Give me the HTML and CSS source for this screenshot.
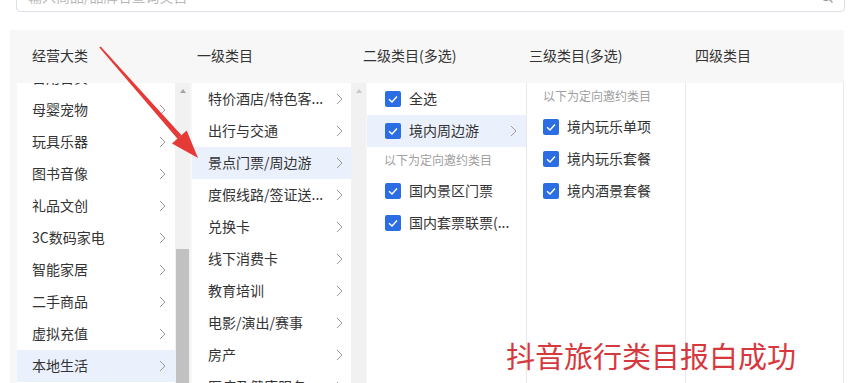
FILE: index.html
```html
<!DOCTYPE html>
<html lang="zh-CN">
<head>
    <meta charset="UTF-8">
    <meta name="viewport" content="width=device-width, initial-scale=1.0">
    <title>类目选择</title>
    <link rel="stylesheet" href="styles.css">
</head>
<body>
    <div class="search">
        <span class="search-ph">输入商品/品牌名查询类目</span>
        <svg class="search-icon" width="14" height="14" viewBox="0 0 14 14"><circle cx="6" cy="6" r="4.5" fill="none" stroke="#999" stroke-width="1.3"/><line x1="9.3" y1="9.3" x2="12.5" y2="12.5" stroke="#999" stroke-width="1.3"/></svg>
    </div>

    <div class="panel">
        <div class="panel-head">
            <div class="head-cell">经营大类</div>
            <div class="head-cell">一级类目</div>
            <div class="head-cell">二级类目(多选)</div>
            <div class="head-cell">三级类目(多选)</div>
            <div class="head-cell">四级类目</div>
        </div>

        <div class="panel-body">
            <!-- 经营大类 -->
            <div class="col col-scroll col-first">
                <div class="list">
                    <div class="list-inner shifted">
                        <div class="row"><span>日用百货</span><svg class="chev" width="7" height="12" viewBox="0 0 7 12"><polyline points="1,1 6,6 1,11" fill="none" stroke="#999" stroke-width="1"/></svg></div>
                        <div class="row"><span>母婴宠物</span><svg class="chev" width="7" height="12" viewBox="0 0 7 12"><polyline points="1,1 6,6 1,11" fill="none" stroke="#999" stroke-width="1"/></svg></div>
                        <div class="row"><span>玩具乐器</span><svg class="chev" width="7" height="12" viewBox="0 0 7 12"><polyline points="1,1 6,6 1,11" fill="none" stroke="#999" stroke-width="1"/></svg></div>
                        <div class="row"><span>图书音像</span><svg class="chev" width="7" height="12" viewBox="0 0 7 12"><polyline points="1,1 6,6 1,11" fill="none" stroke="#999" stroke-width="1"/></svg></div>
                        <div class="row"><span>礼品文创</span><svg class="chev" width="7" height="12" viewBox="0 0 7 12"><polyline points="1,1 6,6 1,11" fill="none" stroke="#999" stroke-width="1"/></svg></div>
                        <div class="row"><span>3C数码家电</span><svg class="chev" width="7" height="12" viewBox="0 0 7 12"><polyline points="1,1 6,6 1,11" fill="none" stroke="#999" stroke-width="1"/></svg></div>
                        <div class="row"><span>智能家居</span><svg class="chev" width="7" height="12" viewBox="0 0 7 12"><polyline points="1,1 6,6 1,11" fill="none" stroke="#999" stroke-width="1"/></svg></div>
                        <div class="row"><span>二手商品</span><svg class="chev" width="7" height="12" viewBox="0 0 7 12"><polyline points="1,1 6,6 1,11" fill="none" stroke="#999" stroke-width="1"/></svg></div>
                        <div class="row"><span>虚拟充值</span><svg class="chev" width="7" height="12" viewBox="0 0 7 12"><polyline points="1,1 6,6 1,11" fill="none" stroke="#999" stroke-width="1"/></svg></div>
                        <div class="row active"><span>本地生活</span><svg class="chev" width="7" height="12" viewBox="0 0 7 12"><polyline points="1,1 6,6 1,11" fill="none" stroke="#999" stroke-width="1"/></svg></div>
                    </div>
                </div>
                <div class="scrollbar">
                    <span class="sb-btn"><span class="sb-up"></span></span>
                    <span class="sb-thumb"></span>
                </div>
            </div>

            <!-- 一级类目 -->
            <div class="col col-scroll col-second">
                <div class="list">
                    <div class="list-inner">
                        <div class="row"><span>特价酒店/特色客...</span><svg class="chev" width="7" height="12" viewBox="0 0 7 12"><polyline points="1,1 6,6 1,11" fill="none" stroke="#999" stroke-width="1"/></svg></div>
                        <div class="row"><span>出行与交通</span><svg class="chev" width="7" height="12" viewBox="0 0 7 12"><polyline points="1,1 6,6 1,11" fill="none" stroke="#999" stroke-width="1"/></svg></div>
                        <div class="row active"><span>景点门票/周边游</span><svg class="chev" width="7" height="12" viewBox="0 0 7 12"><polyline points="1,1 6,6 1,11" fill="none" stroke="#999" stroke-width="1"/></svg></div>
                        <div class="row"><span>度假线路/签证送...</span><svg class="chev" width="7" height="12" viewBox="0 0 7 12"><polyline points="1,1 6,6 1,11" fill="none" stroke="#999" stroke-width="1"/></svg></div>
                        <div class="row"><span>兑换卡</span><svg class="chev" width="7" height="12" viewBox="0 0 7 12"><polyline points="1,1 6,6 1,11" fill="none" stroke="#999" stroke-width="1"/></svg></div>
                        <div class="row"><span>线下消费卡</span><svg class="chev" width="7" height="12" viewBox="0 0 7 12"><polyline points="1,1 6,6 1,11" fill="none" stroke="#999" stroke-width="1"/></svg></div>
                        <div class="row"><span>教育培训</span><svg class="chev" width="7" height="12" viewBox="0 0 7 12"><polyline points="1,1 6,6 1,11" fill="none" stroke="#999" stroke-width="1"/></svg></div>
                        <div class="row"><span>电影/演出/赛事</span><svg class="chev" width="7" height="12" viewBox="0 0 7 12"><polyline points="1,1 6,6 1,11" fill="none" stroke="#999" stroke-width="1"/></svg></div>
                        <div class="row"><span>房产</span><svg class="chev" width="7" height="12" viewBox="0 0 7 12"><polyline points="1,1 6,6 1,11" fill="none" stroke="#999" stroke-width="1"/></svg></div>
                        <div class="row"><span>医疗及健康服务</span><svg class="chev" width="7" height="12" viewBox="0 0 7 12"><polyline points="1,1 6,6 1,11" fill="none" stroke="#999" stroke-width="1"/></svg></div>
                    </div>
                </div>
                <div class="scrollbar">
                    <span class="sb-btn"><span class="sb-up light"></span></span>
                </div>
            </div>

            <!-- 二级类目 -->
            <div class="col col-plain col-third">
                <div class="row check-row"><span class="check"><svg width="16" height="16" viewBox="0 0 16 16"><rect width="16" height="16" rx="2" fill="#2b6de3"/><polyline points="4,8.3 7,11 12,5.5" fill="none" stroke="#fff" stroke-width="1.5"/></svg></span><span class="label">全选</span></div>
                <div class="row check-row active"><span class="check"><svg width="16" height="16" viewBox="0 0 16 16"><rect width="16" height="16" rx="2" fill="#2b6de3"/><polyline points="4,8.3 7,11 12,5.5" fill="none" stroke="#fff" stroke-width="1.5"/></svg></span><span class="label">境内周边游</span><svg class="chev" width="7" height="12" viewBox="0 0 7 12"><polyline points="1,1 6,6 1,11" fill="none" stroke="#999" stroke-width="1"/></svg></div>
                <div class="note">以下为定向邀约类目</div>
                <div class="row check-row"><span class="check"><svg width="16" height="16" viewBox="0 0 16 16"><rect width="16" height="16" rx="2" fill="#2b6de3"/><polyline points="4,8.3 7,11 12,5.5" fill="none" stroke="#fff" stroke-width="1.5"/></svg></span><span class="label">国内景区门票</span></div>
                <div class="row check-row"><span class="check"><svg width="16" height="16" viewBox="0 0 16 16"><rect width="16" height="16" rx="2" fill="#2b6de3"/><polyline points="4,8.3 7,11 12,5.5" fill="none" stroke="#fff" stroke-width="1.5"/></svg></span><span class="label">国内套票联票(...</span></div>
            </div>

            <!-- 三级类目 -->
            <div class="col col-plain col-fourth">
                <div class="note">以下为定向邀约类目</div>
                <div class="row check-row"><span class="check"><svg width="16" height="16" viewBox="0 0 16 16"><rect width="16" height="16" rx="2" fill="#2b6de3"/><polyline points="4,8.3 7,11 12,5.5" fill="none" stroke="#fff" stroke-width="1.5"/></svg></span><span class="label">境内玩乐单项</span></div>
                <div class="row check-row"><span class="check"><svg width="16" height="16" viewBox="0 0 16 16"><rect width="16" height="16" rx="2" fill="#2b6de3"/><polyline points="4,8.3 7,11 12,5.5" fill="none" stroke="#fff" stroke-width="1.5"/></svg></span><span class="label">境内玩乐套餐</span></div>
                <div class="row check-row"><span class="check"><svg width="16" height="16" viewBox="0 0 16 16"><rect width="16" height="16" rx="2" fill="#2b6de3"/><polyline points="4,8.3 7,11 12,5.5" fill="none" stroke="#fff" stroke-width="1.5"/></svg></span><span class="label">境内酒景套餐</span></div>
            </div>

            <!-- 四级类目 -->
            <div class="col col-plain col-fifth"></div>
        </div>
    </div>

    <svg class="arrow" width="861" height="383" viewBox="0 0 861 383">
        <polygon points="99.3,47.6 100.7,46.4 181.5,135.2 177.5,138.8" fill="#e63a37"/>
        <polygon points="198,158 172,143.5 186.7,130.5" fill="#e63a37"/>
    </svg>

    <div class="stamp">抖音旅行类目报白成功</div>
</body>
</html>
```

FILE: styles.css
```css
body {
    margin: 0;
    height: 383px;
    overflow: hidden;
    background: #fff;
    font-family: "Noto Sans CJK SC", "Noto Sans", sans-serif;
    font-size: 14px;
    color: #333;
}

.search {
    margin: -20px 16px 0 16px;
    height: 30px;
    border: 1px solid #dcdfe6;
    border-radius: 4px;
    display: flex;
    align-items: center;
    justify-content: space-between;
    padding: 0 10px 0 11px;
}
.search-ph {
    color: #b8b8b8;
    font-size: 14px;
}
.search-icon {
    display: block;
    margin-top: 2px;
}

.panel {
    margin: 18px 17px 0 10px;
    background: #f7f7f7;
}
.panel-head {
    display: flex;
    height: 53px;
    box-sizing: border-box;
    padding-bottom: 4px;
    align-items: center;
}
.head-cell {
    width: 144px;
    padding-left: 22px;
    flex-shrink: 0;
}
.head-cell:first-child {
    width: 143px;
}

.panel-body {
    display: flex;
    height: 300px;
    padding-left: 7px;
}

.col {
    height: 300px;
    flex-shrink: 0;
}
.col-scroll {
    display: flex;
}
.col-first {
    margin-right: 2px;
}
.col-second {
    margin-right: 1px;
}
.list {
    background: #fff;
    overflow: hidden;
    height: 300px;
}
.col-first .list {
    width: 158px;
}
.col-second .list {
    width: 159px;
}
.list-inner.shifted {
    margin-top: -21px;
}

.scrollbar {
    width: 15px;
    background: #f1f1f1;
    display: flex;
    flex-direction: column;
    align-items: center;
}
.sb-btn {
    height: 17px;
    width: 15px;
    display: flex;
    justify-content: center;
    padding-top: 6px;
    box-sizing: border-box;
}
.sb-up {
    width: 0;
    height: 0;
    border-left: 3.5px solid transparent;
    border-right: 3.5px solid transparent;
    border-bottom: 4px solid #a3a3a3;
}
.sb-up.light {
    border-bottom-color: #c9c9c9;
}
.sb-thumb {
    margin-top: 150px;
    width: 13px;
    height: 140px;
    background: #c1c1c1;
}

.row {
    height: 32px;
    box-sizing: border-box;
    padding-bottom: 3px;
    display: flex;
    align-items: center;
    justify-content: space-between;
    white-space: nowrap;
}
.row .chev {
    margin-top: 3px;
}
.col-first .row {
    padding-left: 15px;
    padding-right: 9px;
}
.col-second .row {
    padding-left: 16px;
    padding-right: 8px;
}
.row.active {
    background: #ebf1fc;
}
.chev {
    display: block;
    flex-shrink: 0;
}

.col-plain {
    background: #fff;
    border-right: 1px solid #e8e8e8;
}
.col-third {
    width: 159px;
}
.col-fourth {
    width: 158px;
}
.col-fifth {
    width: 157px;
}

.check-row {
    justify-content: flex-start;
}
.col-third .check-row {
    padding-left: 18px;
    padding-right: 9px;
}
.col-fourth .check-row {
    padding-left: 16px;
    padding-right: 9px;
}
.check {
    display: block;
    width: 16px;
    height: 16px;
    margin-right: 8px;
    margin-top: 3px;
}
.check svg {
    display: block;
}
.check-row .label {
    flex: 1;
}

.note {
    height: 28px;
    line-height: 26px;
    font-size: 12px;
    color: #a0a0a0;
}
.col-third .note {
    padding-left: 17px;
}
.col-fourth .note {
    padding-left: 16px;
}

.arrow {
    position: absolute;
    left: 0;
    top: 0;
    pointer-events: none;
}

.stamp {
    position: absolute;
    left: 506px;
    top: 337px;
    font-size: 29px;
    line-height: 36px;
    color: #d5393e;
}
```
